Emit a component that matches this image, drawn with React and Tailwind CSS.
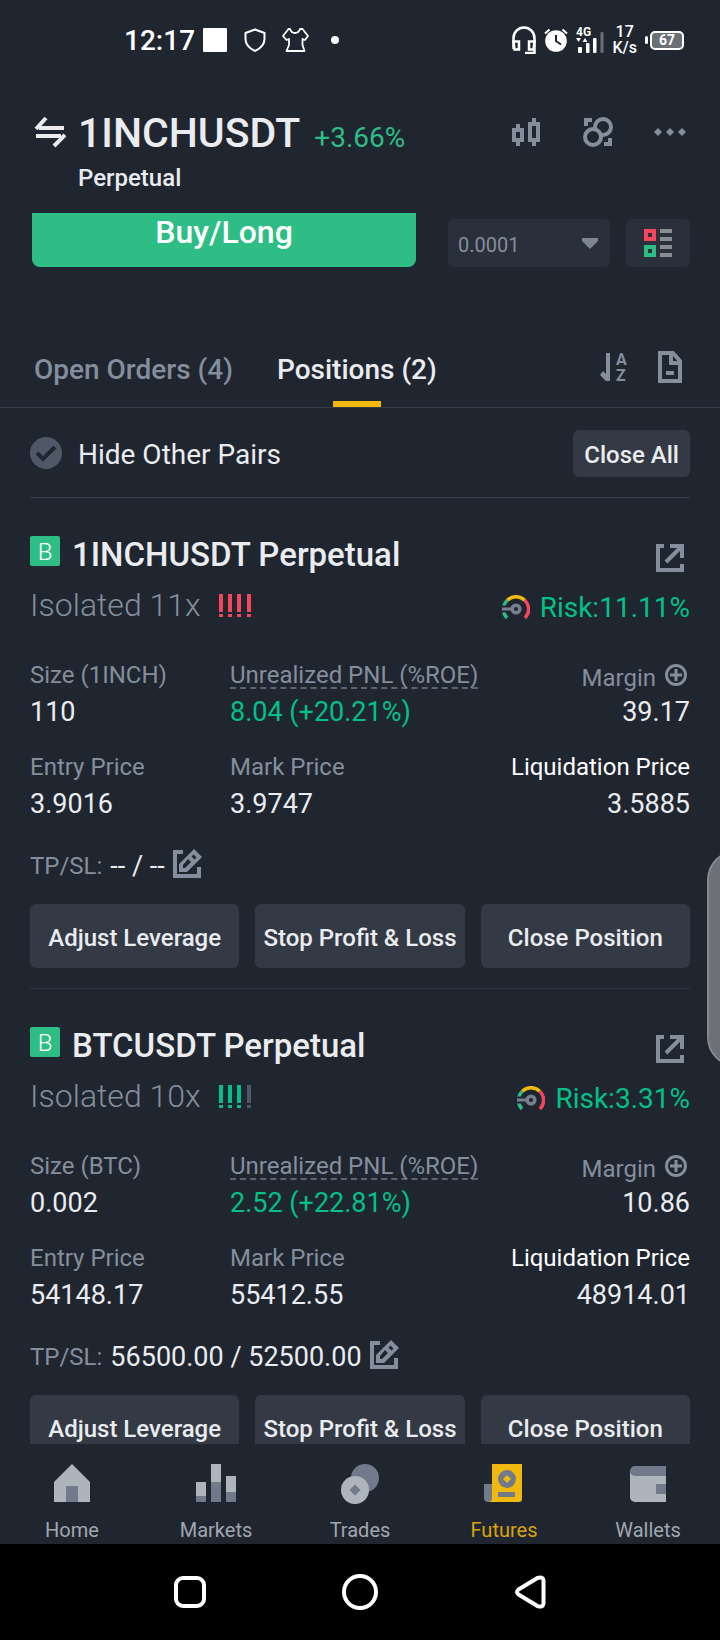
import React, { useState } from 'react';

const positions = [
  {
    symbol: '1INCHUSDT',
    coin: '1INCH',
    leverage: '11x',
    level: 4,
    risk: '11.11%',
    size: '110',
    pnl: '8.04 (+20.21%)',
    margin: '39.17',
    entry: '3.9016',
    mark: '3.9747',
    liquidation: '3.5885',
    tpsl: '-- / --',
  },
  {
    symbol: 'BTCUSDT',
    coin: 'BTC',
    leverage: '10x',
    level: 3,
    risk: '3.31%',
    size: '0.002',
    pnl: '2.52 (+22.81%)',
    margin: '10.86',
    entry: '54148.17',
    mark: '55412.55',
    liquidation: '48914.01',
    tpsl: '56500.00 / 52500.00',
  },
];

const StatusBar = () => (
  <div className="flex h-20 shrink-0 items-center justify-between pl-[124px] pr-9 text-white">
    <div className="flex items-center">
      <span className="pt-[2px] text-[28px] font-medium leading-8">12:17</span>
      <span className="ml-2 size-6 rounded-[1px] bg-white"></span>
      <svg className="ml-4 h-6 w-6" viewBox="0 0 24 24" fill="none" stroke="currentColor" strokeWidth="2" strokeLinejoin="round">
        <path d="M12 1.500l9.500 3.500v6c0 6-4 9.500-9.500 12C6.500 20.500 2.500 17 2.500 11V5z" />
      </svg>
      <svg className="ml-[14px] h-6 w-7" viewBox="0 0 28 24" fill="none" stroke="currentColor" strokeWidth="1.800" strokeLinejoin="round">
        <path d="M9 1H7.500L2 8l3.500 4 2.500-1v6l-2.500 6h18L21.500 17v-6l2.500 1 3-4-5.500-7H19c-1 3-3 4-5 4S10 4 9 1z" />
      </svg>
      <span className="ml-[22px] size-2 rounded-full bg-white"></span>
    </div>
    <div className="flex items-center gap-2">
      <svg className="h-7 w-6" viewBox="0 0 24 28" fill="none" stroke="currentColor" strokeWidth="2.500">
        <path d="M1.500 23V12a10.500 10.500 0 0 1 21 0v15H13" />
        <path d="M1.500 15.500h5.500v8h-4.500zM22.500 15.500H17v8h4.500z" />
      </svg>
      <svg className="h-6 w-6" viewBox="0 0 24 24" fill="none">
        <circle cx="12" cy="13" r="10.800" fill="white" />
        <path d="M1 5.500L5.500 1.500M23 5.500L18.500 1.500" stroke="white" strokeWidth="2" />
        <path d="M12 7v6l5 3.500" stroke="#202630" strokeWidth="2" />
      </svg>
      <svg className="h-8 w-7" viewBox="0 0 28 32" fill="currentColor">
        <text x="0" y="12" fontSize="12" fontWeight="700">4G</text>
        <path d="M0 14h5l-2.500 4zM6.500 18h5L9 14z" />
        <rect x="2" y="23" width="4" height="6" rx="1" />
        <rect x="10" y="19" width="3.500" height="10" rx="1" />
        <rect x="17" y="14" width="3.500" height="15" rx="1" />
        <rect x="24.500" y="8" width="3" height="21" rx="1" fill="#6b6f76" />
      </svg>
      <div className="flex flex-col text-center text-[16px] font-medium leading-4">
        <span>17</span>
        <span>K/s</span>
      </div>
      <div className="flex items-center gap-[2px]">
        <span className="h-2 w-[3px] rounded-full bg-white"></span>
        <span className="flex h-[19px] w-[34px] items-center justify-center rounded-[5px] border-2 border-white bg-[#6b6f76] text-[14px] font-bold leading-4">
          67
        </span>
      </div>
    </div>
  </div>
);

const Header = () => (
  <header className="flex h-[133px] shrink-0 items-start justify-between px-[34px] pt-7">
    <div className="flex items-start gap-3">
      <button aria-label="Switch pair" className="mt-2">
        <svg className="size-8" viewBox="0 0 32 32" fill="none" stroke="#eaecef" strokeWidth="4">
          <path d="M30 12H5M2 13L12 2M2 20h25M31 19L20 30" />
        </svg>
      </button>
      <div>
        <div className="flex items-baseline gap-[14px]">
          <h1 className="text-[41px] font-medium leading-[50px] text-[#eaecef]">1INCHUSDT</h1>
          <span className="text-[28px] leading-8 text-[#2ebd85]">+3.66%</span>
        </div>
        <p className="text-2xl font-medium leading-10 text-[#eaecef]">Perpetual</p>
      </div>
    </div>
    <div className="mt-2 flex gap-10 text-[#848e9c]">
      <button aria-label="Chart">
        <svg className="size-8" viewBox="0 0 32 32" fill="currentColor" fillRule="evenodd">
          <path d="M6 8h4v4h4v14h-4v4H6v-4H2V12h4zM6 16v6h4v-6zM22 2h4v4h4v20h-4v4h-4v-4h-4V6h4zM22 10v12h4V10z" />
        </svg>
      </button>
      <button aria-label="Calculator">
        <svg className="size-8" viewBox="0 0 32 32" fill="none" stroke="currentColor" strokeWidth="4">
          <circle cx="21" cy="11" r="8" />
          <circle cx="11" cy="21" r="8" fill="#202630" />
          <path d="M10 4H4v6M22 28h6v-6" />
        </svg>
      </button>
      <button aria-label="More">
        <svg className="size-8" viewBox="0 0 32 32" fill="currentColor">
          <path d="M4 12l4 4-4 4-4-4zM16 12l4 4-4 4-4-4zM28 12l4 4-4 4-4-4z" />
        </svg>
      </button>
    </div>
  </header>
);

const OrderBar = () => (
  <div className="flex items-end gap-4 pl-8 pr-[30px]">
    <button className="mr-4 h-[54px] flex-1 rounded-b-lg bg-[#2ebd85] pb-[16px] text-[32px] font-medium leading-[38px] text-white">
      Buy/Long
    </button>
    <div className="grid w-[162px]">
      <select
        aria-label="Price step"
        className="col-start-1 row-start-1 h-12 appearance-none rounded-md bg-[#2a303b] px-[10px] pt-1 text-xl text-[#848e9c]"
      >
        <option>0.0001</option>
      </select>
      <svg className="pointer-events-none col-start-1 row-start-1 mr-3 h-[11px] w-4 self-center justify-self-end" viewBox="0 0 16 11" fill="#7d8594">
        <path d="M0 0h16v3l-8 8-8-8z" />
      </svg>
    </div>
    <button aria-label="Order book layout" className="flex h-12 w-16 items-center justify-center rounded-md bg-[#2a303b]">
      <svg className="size-7" viewBox="0 0 28 28" fill="none" strokeWidth="4">
        <path d="M2 2h8v8H2z" stroke="#f6465d" />
        <path d="M2 18h8v8H2z" stroke="#2ebd85" />
        <path d="M16 2h12M16 10h12M16 18h12M16 26h12" stroke="#8a8d92" />
      </svg>
    </button>
  </div>
);

const Tabs = () => (
  <div className="mt-[67px] flex h-[74px] items-stretch justify-between border-b border-[#373d48] px-[34px] text-[28px] font-medium">
    <div className="flex gap-11">
      <button className="pb-[2px] text-[#848e9c]">Open Orders (4)</button>
      <button className="relative pb-[2px] text-[#eaecef]">
        Positions (2)
        <span className="absolute bottom-0 left-1/2 h-[6px] w-12 -translate-x-1/2 bg-[#f0b90b]"></span>
      </button>
    </div>
    <div className="flex items-center gap-6 pb-2 text-[#848e9c]">
      <button aria-label="Sort">
        <svg className="h-9 w-8" viewBox="0 0 32 36" fill="currentColor">
          <path d="M8 4h4v28H8l-6-6 3-4 3 3z" />
          <text x="18" y="16" fontSize="16" fontWeight="700">A</text>
          <text x="18" y="32" fontSize="16" fontWeight="700">Z</text>
        </svg>
      </button>
      <button aria-label="History">
        <svg className="size-8" viewBox="0 0 32 32" fill="none" stroke="currentColor" strokeWidth="4">
          <path d="M6 2h13l7 8v20H6zM17 3v9h8M12 22h8" />
        </svg>
      </button>
    </div>
  </div>
);

const Filter = () => {
  const [hide, setHide] = useState(false);
  return (
    <div className="mx-[30px] flex h-[90px] items-center justify-between border-b border-[#373d48]">
      <label className="flex items-center gap-4 text-[28px] text-[#eaecef]">
        <span className="grid">
          <input
            type="checkbox"
            checked={hide}
            onChange={() => setHide(!hide)}
            className="col-start-1 row-start-1 size-8 appearance-none rounded-full bg-[#4f5867] checked:bg-[#f0b90b]"
          />
          <svg className="pointer-events-none col-start-1 row-start-1 size-8" viewBox="0 0 32 32" fill="none" stroke="#202630" strokeWidth="4">
            <path d="M7 16l6 6L25 10" />
          </svg>
        </span>
        <span className="pt-1">Hide Other Pairs</span>
      </label>
      <button className="mt-[2px] h-[47px] rounded-md bg-[#343a45] px-[11px] pt-[3px] text-2xl font-medium text-[#eaecef]">Close All</button>
    </div>
  );
};

const RiskLevel = ({ level }) => (
  <svg className="h-[23px] w-8" viewBox="0 0 32 23" fill={level === 4 ? '#f6465d' : '#02c086'}>
    {[0, 9, 18, 28].map((x, i) => (
      <path key={x} d={`M${x} 0h4v18h-4zM${x} 20h4v3h-4z`} fill={i < level ? undefined : '#4f5867'} />
    ))}
  </svg>
);

const Gauge = () => (
  <svg className="h-[26px] w-7" viewBox="0 0 28 26" fill="none" strokeWidth="3.500">
    <path d="M5 23A12.300 12.300 0 0 1 5.300 5.300" stroke="#2ebd85" />
    <path d="M5.300 5.300A12.300 12.300 0 0 1 22.700 5.300" stroke="#f0b90b" />
    <path d="M22.700 5.300A12.300 12.300 0 0 1 23 23" stroke="#f6465d" />
    <path d="M0 14h10" stroke="#202630" strokeWidth="7" />
    <path d="M0 14h10" stroke="#76808f" strokeWidth="3" />
    <circle cx="14" cy="14" r="3.800" stroke="#76808f" />
  </svg>
);

const Stat = ({ label, value }) => (
  <div className="text-2xl leading-9">
    <div className="text-[#848e9c]">{label}</div>
    <div className="pt-px text-[27px] leading-9 text-[#eaecef]">{value}</div>
  </div>
);

const Position = ({ p }) => (
  <section className="mx-[30px] border-b border-[#2d343f] pb-5 pt-[37px]">
    <div className="flex h-10 items-start justify-between">
      <div className="flex items-start gap-3">
        <span className="mt-px flex size-[30px] items-center justify-center rounded-xs bg-[#2ebd85] pt-px text-2xl font-light text-white">B</span>
        <h2 className="text-[33px] font-medium leading-10 text-[#eaecef]">{p.symbol} Perpetual</h2>
      </div>
      <button aria-label="Share position" className="mr-[6px] mt-[9px]">
        <svg className="size-7" viewBox="0 0 28 28" fill="none" stroke="#848e9c" strokeWidth="4">
          <path d="M8 2H2v24h24v-6M14 2h12v12M25 3L10 18" />
        </svg>
      </button>
    </div>
    <div className="mt-[10px] flex h-10 items-center justify-between">
      <div className="flex items-center gap-[18px] text-[32px] font-light text-[#848e9c]">
        <span>Isolated {p.leverage}</span>
        <RiskLevel level={p.level} />
      </div>
      <div className="flex items-center gap-[10px] pt-[6px] text-[28px] text-[#02c086]">
        <Gauge />
        <span>Risk:{p.risk}</span>
      </div>
    </div>

    <div className="mt-8 grid grid-cols-[200px_1fr_auto] gap-y-[19px]">
      <Stat label={`Size (${p.coin})`} value={p.size} />
      <Stat
        label={<span className="mb-1 block h-8 w-fit border-b-2 border-dashed border-[#5b6470] leading-9">Unrealized PNL (%ROE)</span>}
        value={<span className="text-[#02c086]">{p.pnl}</span>}
      />
      <div className="text-right">
        <div className="flex h-9 items-center justify-end gap-[6px] text-2xl text-[#848e9c]">
          <span className="pt-[6px]">Margin</span>
          <button aria-label="Add margin">
            <svg className="size-7" viewBox="0 0 28 28" fill="none" stroke="currentColor" strokeWidth="3">
              <circle cx="14" cy="14" r="9.500" />
              <path d="M14 8v12M8 14h12" />
            </svg>
          </button>
        </div>
        <div className="pt-px text-[27px] leading-9 text-[#eaecef]">{p.margin}</div>
      </div>
      <Stat label="Entry Price" value={p.entry} />
      <Stat label="Mark Price" value={p.mark} />
      <div className="text-right">
        <Stat label={<span className="text-white">Liquidation Price</span>} value={p.liquidation} />
      </div>
    </div>

    <div className="mt-[26px] flex h-9 items-center gap-2 text-2xl text-[#848e9c]">
      <span>TP/SL:</span>
      <span className="pt-[2px] text-[27px] text-[#eaecef]">{p.tpsl}</span>
      <button aria-label="Edit TP/SL" className="pb-1">
        <svg className="size-[30px]" viewBox="0 0 30 30" fill="currentColor" fillRule="evenodd">
          <path d="M0 1h10v4H4v20h20v-7h4v11H0z" />
          <path d="M6 23v-8L21 0l8 8-15 15zM10 19h2l6-6-3-3-5 6zM20.500 5.500l-2 2 3 3 2-2z" />
        </svg>
      </button>
    </div>

    <div className="mt-5 grid grid-cols-3 gap-4 text-2xl font-medium text-[#eaecef]">
      <button className="h-16 whitespace-nowrap rounded-md bg-[#343a45] pt-[3px]">Adjust Leverage</button>
      <button className="h-16 whitespace-nowrap rounded-md bg-[#343a45] pt-[3px]">Stop Profit &amp; Loss</button>
      <button className="h-16 whitespace-nowrap rounded-md bg-[#343a45] pt-[3px]">Close Position</button>
    </div>
  </section>
);

const tabs = [
  {
    name: 'Home',
    icon: (
      <>
        <path d="M2 18L20 0l18 18v20H2z" fill="#aeb4bc" />
        <path d="M14 22h12v16H14z" fill="#707a8a" />
      </>
    ),
  },
  {
    name: 'Markets',
    icon: (
      <>
        <path d="M0 18h10v14H0zM15 0h10v18H15zM30 12h10v16H30z" fill="#aeb4bc" />
        <path d="M0 32h10v6H0zM15 18h10v20H15zM30 28h10v10H30z" fill="#707a8a" />
      </>
    ),
  },
  {
    name: 'Trades',
    icon: (
      <>
        <circle cx="25" cy="14" r="14" fill="#707a8a" />
        <circle cx="15" cy="26" r="14" fill="#aeb4bc" />
        <path d="M15 20.500l5.500 5.500-5.500 5.500L9.500 26z" fill="#707a8a" />
      </>
    ),
  },
  {
    name: 'Futures',
    active: true,
    icon: (
      <>
        <path d="M0 20h10v18H4a4 4 0 0 1-4-4z" fill="#707a8a" />
        <path d="M8 0h30v35a3 3 0 0 1-3 3H4c3 0 4-2 4-4z" fill="#f0b90b" />
        <circle cx="23" cy="15" r="9" fill="#707a8a" />
        <path d="M23 11l4 4-4 4-4-4z" fill="#f0b90b" />
        <path d="M14 28h17v5H14z" fill="#707a8a" />
      </>
    ),
  },
  {
    name: 'Wallets',
    icon: (
      <>
        <path d="M2 7h36v31H7a5 5 0 0 1-5-5z" fill="#aeb4bc" />
        <path d="M38 2v10H7a5 5 0 0 1 0-10zM28 20h10v10H28z" fill="#707a8a" />
      </>
    ),
  },
];

const BottomTabs = () => (
  <nav className="grid h-[100px] shrink-0 grid-cols-5 bg-[#202630]">
    {tabs.map((t) => (
      <a key={t.name} href="#" className={`flex flex-col items-center pt-5 text-xl ${t.active ? 'text-[#d9a40a]' : 'text-[#a0a6b0]'}`}>
        <svg className="size-10" viewBox="0 0 40 40">{t.icon}</svg>
        <span className="mt-3">{t.name}</span>
      </a>
    ))}
  </nav>
);

const SystemNav = () => (
  <div className="flex h-24 shrink-0 items-center justify-center gap-[134px] bg-black text-white">
    <button aria-label="Recent apps">
      <svg className="size-9" viewBox="0 0 36 36" fill="none" stroke="currentColor" strokeWidth="4">
        <rect x="4" y="4" width="28" height="28" rx="7" />
      </svg>
    </button>
    <button aria-label="Home screen">
      <svg className="size-9" viewBox="0 0 36 36" fill="none" stroke="currentColor" strokeWidth="4">
        <circle cx="18" cy="18" r="16" />
      </svg>
    </button>
    <button aria-label="Back">
      <svg className="size-9" viewBox="0 0 36 36" fill="none" stroke="currentColor" strokeWidth="4" strokeLinejoin="round">
        <path d="M6.500 15.500L25 4.200Q31 2 31.500 6.500v23Q31 34 25 31.800L6.500 20.500Q3.500 18 6.500 15.500z" />
      </svg>
    </button>
  </div>
);

export default function App() {
  return (
    <div className="relative flex h-screen flex-col overflow-hidden bg-[#202630] font-['Roboto',sans-serif]">
      <StatusBar />
      <Header />
      <main className="min-h-0 flex-1 overflow-hidden">
        <OrderBar />
        <Tabs />
        <Filter />
        {positions.map((p) => (
          <Position key={p.symbol} p={p} />
        ))}
      </main>
      <BottomTabs />
      <SystemNav />
      {/* edge panel handle */}
      <div className="absolute -right-[47px] top-[850px] h-[217px] w-[60px] rounded-[30px] border-2 border-[#85888d] bg-[#6d7077]"></div>
    </div>
  );
}
